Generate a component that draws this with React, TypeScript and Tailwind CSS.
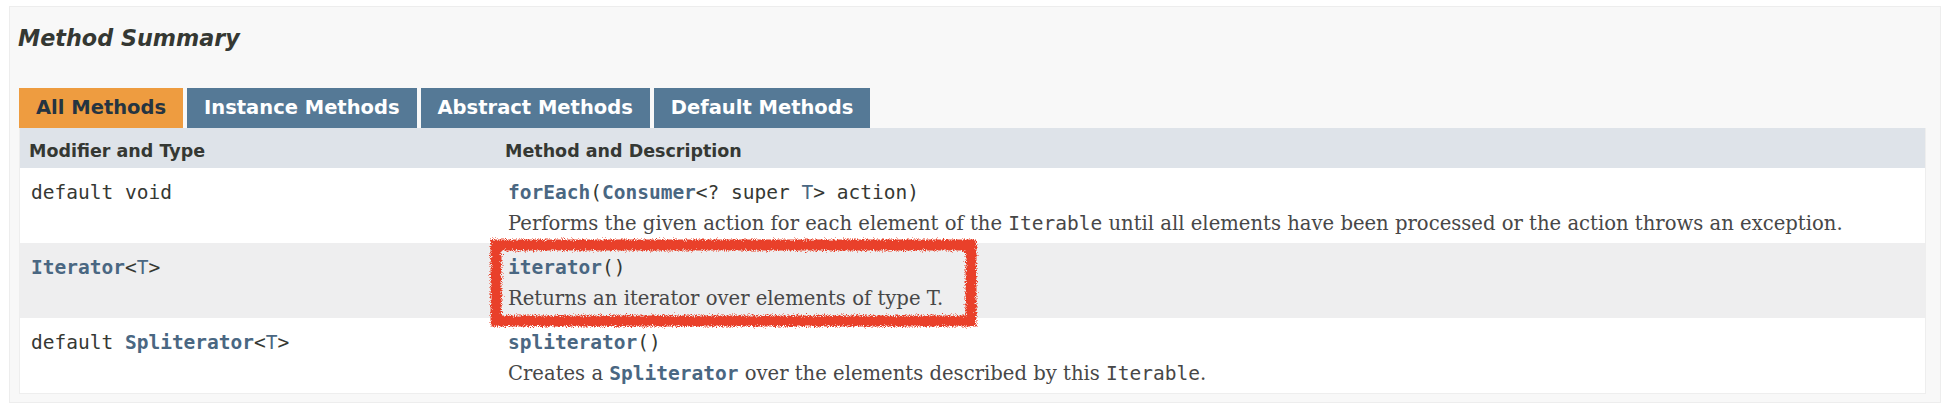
import React from "react"

const sans = "font-['DejaVu_Sans',sans-serif]"
const mono = "font-['DejaVu_Sans_Mono',monospace]"
const serif = "font-['DejaVu_Serif',serif]"

function Link({ children, bold = true }: { children: React.ReactNode; bold?: boolean }) {
  return <span className={`text-[#4a6782] ${bold ? "font-bold" : ""}`}>{children}</span>
}

const rows = [
  {
    type: <>default void</>,
    sig: (
      <>
        <Link>forEach</Link>(<Link>Consumer</Link>&lt;? super <Link bold={false}>T</Link>&gt; action)
      </>
    ),
    desc: (
      <>
        Performs the given action for each element of the <code className={`${mono} text-[19.5px]`}>Iterable</code> until all
        elements have been processed or the action throws an exception.
      </>
    ),
    bg: "bg-white",
  },
  {
    type: (
      <>
        <Link>Iterator</Link>&lt;<Link bold={false}>T</Link>&gt;
      </>
    ),
    sig: (
      <>
        <Link>iterator</Link>()
      </>
    ),
    desc: <>Returns an iterator over elements of type T.</>,
    bg: "bg-[#eeeeef]",
  },
  {
    type: (
      <>
        default <Link>Spliterator</Link>&lt;<Link bold={false}>T</Link>&gt;
      </>
    ),
    sig: (
      <>
        <Link>spliterator</Link>()
      </>
    ),
    desc: (
      <>
        Creates a <code className={`${mono} text-[19.5px] font-bold text-[#4a6782]`}>Spliterator</code> over the elements
        described by this <code className={`${mono} text-[19.5px]`}>Iterable</code>.
      </>
    ),
    bg: "bg-white",
  },
]

const tabs = ["All Methods", "Instance Methods", "Abstract Methods", "Default Methods"]

export default function App() {
  return (
    <div className="relative h-[410px] w-[1948px] bg-white pt-[6px] pl-[9px] pr-[7px]">
      <div className="h-[397px] border border-[#ededed] bg-[#f8f8f8] pl-[9px] pr-[14px] pt-[17px]">
        <h3 className={`${sans} -ml-[1px] text-[22.3px] leading-[28px] font-bold italic text-[#353833]`}>Method Summary</h3>

        {/* tabs */}
        <div className="mt-[36px] flex gap-[4px]">
          {tabs.map((t, i) => (
            <div
              key={t}
              className={`${sans} flex h-[40px] items-center px-[17px] text-[19.5px] font-bold ${
                i === 0 ? "bg-[#ee9c40] text-[#253441]" : "bg-[#557996] text-white"
              }`}
            >
              {t}
            </div>
          ))}
        </div>

        {/* table */}
        <div className="border-x border-b border-[#eeeeee]">
          <div className={`${sans} flex h-[40px] items-center bg-[#dee3e9] pt-[6px] text-[17.5px] font-bold text-[#353833]`}>
            <div className="w-[474px] shrink-0 pl-[9px]">Modifier and Type</div>
            <div className="pl-[11px]">Method and Description</div>
          </div>
          {rows.map((r, i) => (
            <div key={i} className={`flex pt-[12px] pb-[7px] ${r.bg}`}>
              <div className={`${mono} w-[474px] shrink-0 pl-[11px] text-[19.5px] leading-[25px] text-[#353833]`}>{r.type}</div>
              <div className="pl-[14px]">
                <div className={`${mono} text-[19.5px] leading-[25px] text-[#353833]`}>{r.sig}</div>
                <div className={`${serif} mt-[6px] text-[19.6px] leading-[25px] text-[#474747]`}>{r.desc}</div>
              </div>
            </div>
          ))}
        </div>
      </div>

      {/* hand-drawn highlight over the iterator() cell */}
      <svg className="pointer-events-none absolute left-0 top-0" width="1948" height="410">
        <defs>
          <filter id="rough" x="-5%" y="-20%" width="110%" height="140%">
            <feTurbulence type="fractalNoise" baseFrequency="1.1" numOctaves="2" seed="7" />
            <feDisplacementMap in="SourceGraphic" scale="7" />
          </filter>
        </defs>
        <rect x="496" y="245" width="475" height="76" fill="none" stroke="#e9412a" strokeWidth="11" filter="url(#rough)" />
      </svg>
    </div>
  )
}
